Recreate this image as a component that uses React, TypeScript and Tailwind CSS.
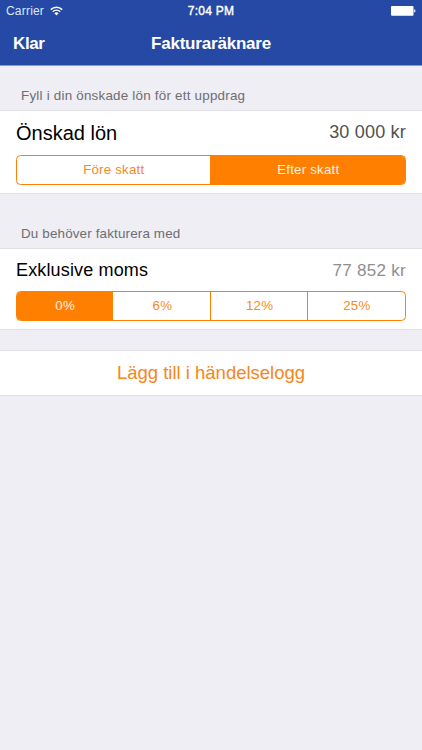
import React from "react";

type SegmentProps = { options: string[]; selected: number };

function Segments({ options, selected }: SegmentProps) {
  return (
    <div className="flex h-[30px] overflow-hidden rounded-[4.5px] border border-[#ff8000] bg-white text-[13.3px] tracking-[0.2px]">
      {options.map((label, i) => (
        <button
          key={label}
          className={`flex-1 pb-px ${i > 0 ? "-ml-px border-l border-[#ff8000] pl-px" : ""} ${
            i === selected ? "bg-[#ff8000] text-[#fff1e0]" : "text-[#f68a25]"
          }`}
        >
          {label}
        </button>
      ))}
    </div>
  );
}

function WifiIcon() {
  return (
    <svg className="ml-[6px] h-[10px] w-[13px]" viewBox="0 0 13 10" fill="none" stroke="#fff">
      <path d="M.8 3.6a8.1 8.1 0 0 1 11.4 0" strokeWidth="1.5" />
      <path d="M2.8 5.7a5.25 5.25 0 0 1 7.4 0" strokeWidth="1.4" />
      <path d="M4.4 7.3a3 3 0 0 1 4.2 0L6.5 9.4z" fill="#fff" stroke="none" />
    </svg>
  );
}

function BatteryIcon() {
  return (
    <svg className="h-[10px] w-[25px]" viewBox="0 0 25 10" fill="#fff">
      <rect width="22.5" height="9.7" rx="1" />
      <path d="M23.2 3.2c1.7.3 1.7 3 0 3.3z" />
    </svg>
  );
}

export default function App() {
  return (
    <div className="h-[750px] w-[422px] overflow-hidden bg-[#efeef4] font-['Liberation_Sans',Arial,sans-serif] text-black">
      <header className="h-[66px] border-b border-[#8c9bcd] bg-[#2549a4] text-white">
        <div className="grid h-[22px] grid-cols-3 items-center pl-[6px] pr-[6px] text-[12px]">
          <div className="flex items-center text-[#dfe6f8]">
            <span className="tracking-[0.2px]">Carrier</span>
            <WifiIcon />
          </div>
          <span className="text-center text-[12px] tracking-[0.25px] [-webkit-text-stroke:0.4px_white]">7:04 PM</span>
          <div className="flex justify-end">
            <BatteryIcon />
          </div>
        </div>
        <div className="grid h-[43px] grid-cols-[1fr_auto_1fr] items-center px-[13px] text-[17px] font-bold tracking-[-0.2px]">
          <span className="tracking-[-0.4px]">Klar</span>
          <h1>Fakturaräknare</h1>
        </div>
      </header>
      <main>
        <h2 className="h-[44px] pl-[21px] pt-[20px] text-[13.4px] leading-[20px] tracking-[0.22px] text-[#6d6d72]">
          Fyll i din önskade lön för ett uppdrag
        </h2>
        <section className="h-[84px] border-y border-[#e0dfe4] bg-white px-4">
          <div className="flex h-[44px] items-center justify-between">
            <span className="text-[20px]">Önskad lön</span>
            <span className="pb-[2px] text-[18px] tracking-[0.2px] text-[#505050]">30 000 kr</span>
          </div>
          <Segments options={["Före skatt", "Efter skatt"]} selected={1} />
        </section>
        <h2 className="h-[54px] pl-[21px] pt-[30px] text-[13.4px] leading-[20px] tracking-[0.16px] text-[#6d6d72]">
          Du behöver fakturera med
        </h2>
        <section className="h-[82px] border-y border-[#e0dfe4] bg-white px-4">
          <div className="flex h-[42px] items-center justify-between">
            <span className="text-[18px] tracking-[0.15px]">Exklusive moms</span>
            <span className="pt-[2px] text-[17px] tracking-[0.3px] text-[#8e8e93]">77 852 kr</span>
          </div>
          <Segments options={["0%", "6%", "12%", "25%"]} selected={0} />
        </section>
        <button className="mt-[20px] block h-[46px] w-full border-y border-[#e0dfe4] bg-white text-[18.5px] text-[#f68620]">
          Lägg till i händelselogg
        </button>
      </main>
    </div>
  );
}
